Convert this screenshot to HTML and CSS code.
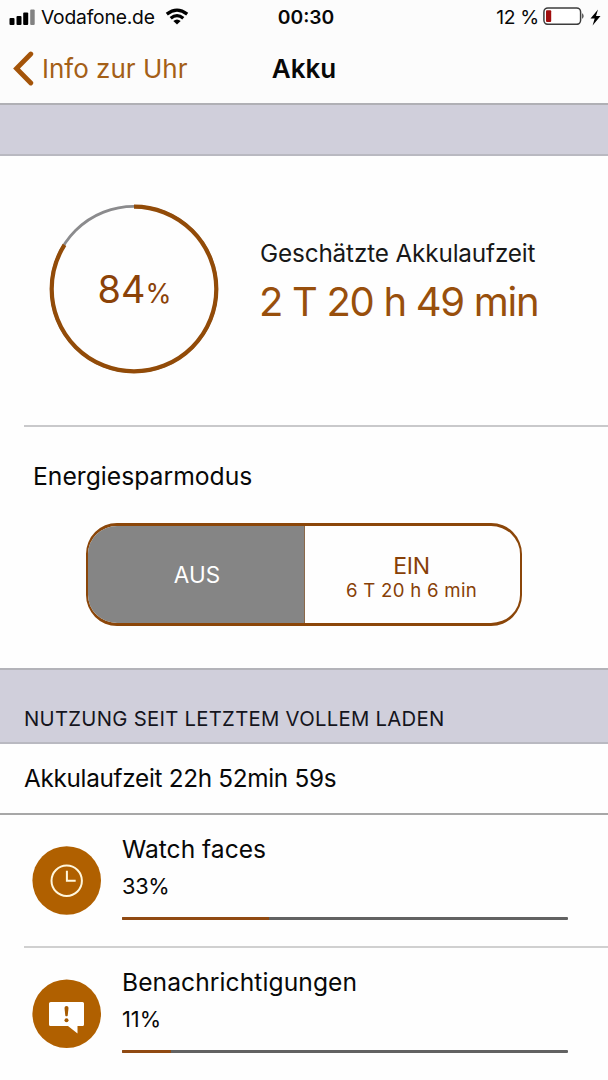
FILE: index.html
```html
<!DOCTYPE html>
<html lang="de">
<head>
<meta charset="utf-8">
<title>Akku</title>
<link rel="stylesheet" href="styles.css">
</head>
<body>
<header class="top">
  <div class="status">
    <div class="status-left">
      <svg class="signal" width="27" height="16" viewBox="0 0 27 16"><rect x="0.5" y="9" width="5" height="7" rx="1"/><rect x="7.5" y="7" width="5" height="9" rx="1"/><rect x="14.2" y="3.5" width="5" height="12.500" rx="1"/><rect x="21.200" y="0.500" width="4.500" height="15.500" rx="1" fill="#828282"/></svg>
      <span class="carrier">Vodafone.de</span>
      <svg class="wifi" width="24" height="17" viewBox="0 0 24 17"><g fill="none" stroke="#000" stroke-width="3.300"><path d="M1.800 6.100Q12 -1.800 22.200 6.100"/><path d="M5.700 10.300Q12 5 18.300 10.300"/></g><path d="M8.300 13Q12 10 15.700 13L12 16.500Z"/></svg>
    </div>
    <span class="time">00:30</span>
    <div class="status-right">
      <span class="percent">12 %</span>
      <svg class="battery" width="42" height="18" viewBox="0 0 42 18"><rect x="0.900" y="0.900" width="36.700" height="16.400" rx="4" fill="#fff" stroke="#3c3c3c" stroke-width="1.500"/><rect x="3" y="3.200" width="5.200" height="11.800" rx="1" fill="#a00d0d"/><path d="M39.200 6Q42 9 39.200 12Z" fill="#3c3c3c"/></svg>
      <svg class="bolt" width="11" height="17" viewBox="0 0 11 17"><path d="M8 0.500L0.500 9.500H4.700L2.600 16.500L10.500 6.900H6Z"/></svg>
    </div>
  </div>
  <nav class="nav">
    <a class="back"><svg width="22" height="36" viewBox="0 0 22 36"><path d="M18.800 3L4.500 17.500L18.800 32" fill="none" stroke="#a45409" stroke-width="4.800" stroke-linecap="round"/></svg><span>Info zur Uhr</span></a>
    <h1 class="title">Akku</h1>
  </nav>
</header>
<div class="band"></div>
<section class="summary">
  <div class="ring">
    <svg width="170" height="170" viewBox="0 0 170 170"><circle cx="85" cy="85" r="82.700" fill="none" stroke="#8b8b8d" stroke-width="2.800"/><circle cx="85" cy="85" r="82.300" fill="none" stroke="#924b08" stroke-width="4.200" pathLength="100" stroke-dasharray="84 16" transform="rotate(-90 85 85)"/></svg>
    <div class="ring-value">84<span>%</span></div>
  </div>
  <div class="estimate">
    <div class="estimate-label">Geschätzte Akkulaufzeit</div>
    <div class="estimate-value">2 T 20 h 49 min</div>
  </div>
</section>
<section class="saver">
  <h2 class="saver-title">Energiesparmodus</h2>
  <div class="segment">
    <div class="seg off">AUS</div>
    <div class="seg on"><span class="on-label">EIN</span><span class="on-time">6 T 20 h 6 min</span></div>
  </div>
</section>
<div class="band usage-head"><span>NUTZUNG SEIT LETZTEM VOLLEM LADEN</span></div>
<div class="runtime"><span>Akkulaufzeit 22h 52min 59s</span></div>
<ul class="usage">
  <li class="item">
    <svg class="icon" width="70" height="70" viewBox="0 0 70 70"><circle cx="34.700" cy="34.500" r="34.300" fill="#b06000"/><circle cx="34.700" cy="34.800" r="15.200" fill="none" stroke="#fff7dd" stroke-width="2"/><path d="M34.900 24.800V34.800H43.700" fill="none" stroke="#fff7dd" stroke-width="2"/></svg>
    <div class="details"><div class="name">Watch faces</div><div class="share">33%</div><div class="bar"><div class="fill" style="width:33%"></div></div></div>
  </li>
  <li class="item">
    <svg class="icon" width="70" height="70" viewBox="0 0 70 70"><circle cx="34.700" cy="34.800" r="34.300" fill="#b06000"/><path d="M18.800 23H50.500Q52 23 52 24.500V45.500Q52 47 50.500 47H45.500V54.500L36 47H18.500Q17 47 17 45.500V24.500Q17 23 18.800 23Z" fill="#fff"/><path d="M32.500 29Q32.500 27 34.500 27Q36.500 27 36.500 29L35.700 36.700Q34.500 38 33.300 36.700Z" fill="#a65a00"/><circle cx="34.500" cy="41.300" r="2" fill="#a65a00"/></svg>
    <div class="details"><div class="name long">Benachrichtigungen</div><div class="share">11%</div><div class="bar"><div class="fill" style="width:11%"></div></div></div>
  </li>
</ul>
</body>
</html>
```
FILE: styles.css
```css
* { box-sizing: border-box; }
body { margin: 0; width: 608px; height: 1080px; overflow: hidden; background: #fefefe; color: #080808; font-family: Inter, "Liberation Sans", sans-serif; white-space: nowrap; }
svg { display: block; flex: none; }
h1, h2, ul { margin: 0; padding: 0; font-weight: 400; }
.top { height: 105px; background: #fcfcfc; border-bottom: 2px solid #b0b0b5; }
.status { display: grid; grid-template-columns: 1fr auto 1fr; align-items: center; height: 34px; padding: 0 7px 0 9px; font-size: 19.3px; line-height: 34px; }
.status-left, .status-right { display: flex; align-items: center; }
.status-right { justify-content: flex-end; }
.carrier { margin-left: 5px; letter-spacing: -0.2px; }
.wifi { margin-left: 10px; margin-bottom: 1px; }
.time { font-weight: 600; letter-spacing: 0; padding-left: 2px; }
.percent { letter-spacing: -0.3px; }
.battery { margin-left: 4px; margin-top: -2px; }
.bolt { margin-left: 5px; }
.nav { display: grid; grid-template-columns: 1fr auto 1fr; align-items: center; height: 69px; padding: 0 12px; }
.back { display: flex; align-items: center; gap: 8px; font-size: 26px; color: #a45f17; letter-spacing: 0; }
.title { font-size: 26px; font-weight: 600; }
.band { height: 51px; background: #d0cfdb; border-bottom: 2px solid #b9b9c1; }
.summary { display: flex; height: 271px; padding-left: 49px; position: relative; }
.summary::after { content: ""; position: absolute; left: 24px; right: 0; bottom: 0; height: 2px; background: #c9c9cb; }
.ring { display: grid; width: 170px; height: 170px; margin-top: 48px; place-items: center; }
.ring > * { grid-area: 1 / 1; }
.ring-value { font-size: 37.8px; color: #8b4208; line-height: 44px; padding: 4px 0 0 1px; }
.ring-value span { font-size: 26.5px; }
.estimate { margin: 82px 0 0 41px; }
.estimate-label { font-size: 24.3px; line-height: 30px; letter-spacing: -0.15px; color: #181818; }
.estimate-value { margin-left: -1px; font-size: 40px; line-height: 68px; letter-spacing: -1.3px; color: #984f0c; }
.saver { height: 241px; padding: 34px 0 0 32px; }
.saver-title { margin-left: 1px; font-size: 24.7px; line-height: 30px; }
.segment { display: grid; grid-template-columns: 217px 1fr; width: 436px; height: 103px; margin: 32px 0 0 54px; border: solid #8b4609; border-width: 3px 2px; border-radius: 31px; overflow: hidden; }
.seg { display: flex; flex-direction: column; align-items: center; justify-content: center; }
.off { background: #858585; border-right: 1px solid #8b6849; color: #fff; font-size: 22.5px; padding-left: 2px; }
.on { color: #874007; padding: 3px 2px 0 0; }
.on-label { font-size: 23px; line-height: 28px; letter-spacing: -0.3px; }
.on-time { font-size: 18.6px; line-height: 21px; letter-spacing: 0.28px; }
.usage-head { height: 76px; border-top: 2px solid #b3b3b9; padding: 35px 0 0 24px; font-size: 20.3px; line-height: 28px; letter-spacing: 0.28px; color: #15151d; }
.runtime { height: 71px; padding: 19px 0 0 24px; border-bottom: 2px solid #a7a7a7; font-size: 24.3px; line-height: 30px; letter-spacing: -0.3px; }
.usage { list-style: none; }
.item { display: flex; height: 133px; padding: 19px 40px 0 32px; position: relative; }
.item:first-child::after { content: ""; position: absolute; left: 24px; right: 0; bottom: 0; height: 2px; background: #d0d0d0; }
.icon { margin-top: 12px; }
.details { flex: 1; margin-left: 20px; }
.name { font-size: 24.6px; line-height: 30px; }
.long { letter-spacing: 0.08px; }
.share { margin-top: 8px; font-size: 21.8px; line-height: 28px; letter-spacing: -0.3px; }
.long + .share { letter-spacing: 0; }
.bar { height: 3px; margin-top: 17px; background: #626262; border-radius: 1px; overflow: hidden; }
.fill { height: 100%; background: #904a12; }
```
